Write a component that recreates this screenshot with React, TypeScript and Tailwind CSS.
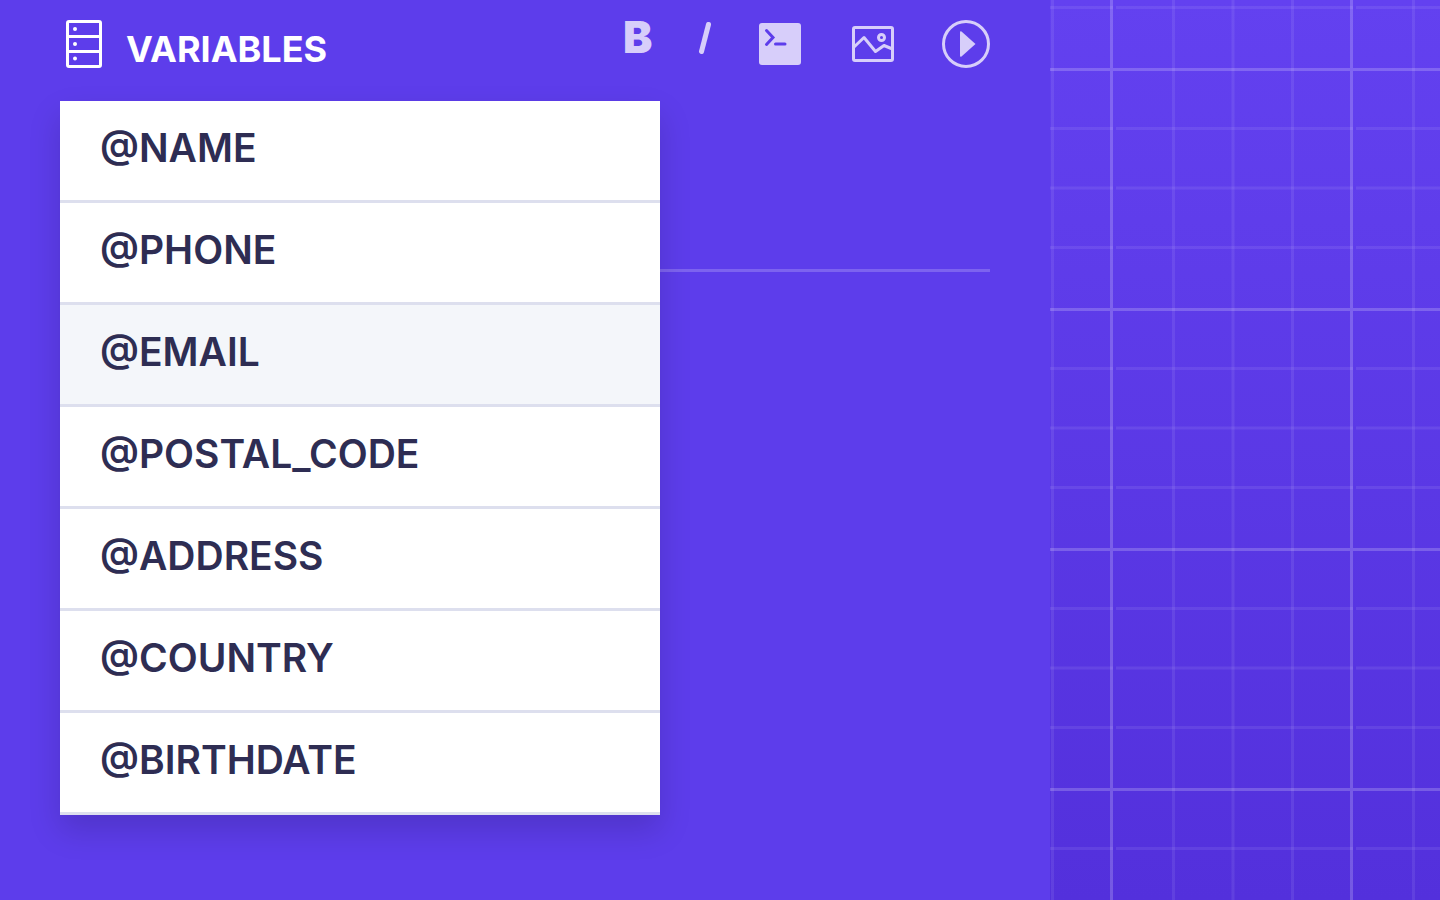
const variables = ["NAME", "PHONE", "EMAIL", "POSTAL_CODE", "ADDRESS", "COUNTRY", "BIRTHDATE"];
const highlighted = "EMAIL";

function ServerIcon() {
  return (
    <svg width="36" height="48" viewBox="0 0 36 48" fill="none" stroke="currentColor" strokeWidth="3" aria-hidden="true">
      <rect x="1.5" y="1.5" width="33" height="45" rx="1.5" />
      <path d="M1.5 16.5h33M1.5 31.5h33" />
      <g fill="currentColor" stroke="none">
        <circle cx="9" cy="9" r="2" />
        <circle cx="9" cy="24" r="2" />
        <circle cx="9" cy="38.5" r="2" />
      </g>
    </svg>
  );
}

function SlantIcon() {
  return (
    <svg width="14" height="32" viewBox="0 0 14 32" stroke="currentColor" strokeWidth="5" strokeLinecap="round" aria-hidden="true">
      <path d="M11.5 2.5L4.5 29.5" />
    </svg>
  );
}

function TerminalIcon() {
  return (
    <svg width="42" height="42" viewBox="0 0 42 42" fill="none" aria-hidden="true">
      <rect width="42" height="42" rx="3" fill="currentColor" />
      <path d="M7.5 7.5L14 14.5L7.5 21.5M16.5 21H26" stroke="#5d3deb" strokeWidth="3" strokeLinecap="round" />
    </svg>
  );
}

function ImageIcon() {
  return (
    <svg width="42" height="36" viewBox="0 0 42 36" fill="none" stroke="currentColor" strokeWidth="3" aria-hidden="true">
      <rect x="1.5" y="1.5" width="39" height="33" rx="1.5" />
      <path d="M1.5 21.5L12 11.5L23.5 25.5L32 19.5L40.5 23" strokeLinejoin="round" />
      <circle cx="29.5" cy="11.5" r="3" />
    </svg>
  );
}

function PlayIcon() {
  return (
    <svg width="48" height="48" viewBox="0 0 48 48" fill="none" aria-hidden="true">
      <circle cx="24" cy="24" r="22.5" stroke="currentColor" strokeWidth="3" />
      <path d="M18 12.5Q18 10.5 19.5 11.5L33.5 24L19.5 36.5Q18 37.5 18 35.5Z" fill="currentColor" />
    </svg>
  );
}

function Blueprint() {
  return (
    <svg className="block size-full" aria-hidden="true">
      <defs>
        <pattern id="cell" x="60" y="68" width="240" height="240" patternUnits="userSpaceOnUse">
          <g fill="#fff" fillOpacity="0.08">
            <rect x="62" width="3" height="240" />
            <rect x="121.5" width="3" height="240" />
            <rect x="181" width="3" height="240" />
            <rect y="59" x="6" width="234" height="3" />
            <rect y="118.5" x="6" width="234" height="3" />
            <rect y="178" x="6" width="234" height="3" />
            <rect y="59" width="3" height="3" />
            <rect y="118.5" width="3" height="3" />
            <rect y="178" width="3" height="3" />
          </g>
          <g fill="#fff" fillOpacity="0.2">
            <rect width="3" height="240" />
            <rect x="3" width="237" height="3" />
          </g>
        </pattern>
      </defs>
      <rect width="100%" height="100%" fill="url(#cell)" />
    </svg>
  );
}

export default function App() {
  return (
    <div className="flex min-h-screen bg-[#5d3deb] font-[Inter,sans-serif]">
      <main className="relative min-w-0 flex-1 px-[60px] pt-5">
        <header className="flex h-12 items-start justify-between text-[#d7cefa]">
          <button
            type="button"
            aria-haspopup="listbox"
            aria-expanded="true"
            className="flex items-start gap-6 pl-1.5 text-white"
          >
            <ServerIcon />
            <span className="pt-[9px] text-[36px] leading-10 font-bold">VARIABLES</span>
          </button>
          <div className="flex items-start gap-12">
            <button type="button" aria-label="Bold" className="w-[26px] text-[44px] leading-[34px] font-black">
              B
            </button>
            <button type="button" aria-label="Italic" className="pt-0.5">
              <SlantIcon />
            </button>
            <button type="button" aria-label="Code" className="w-[45px] pt-[3px]">
              <TerminalIcon />
            </button>
            <button type="button" aria-label="Image" className="pt-1.5">
              <ImageIcon />
            </button>
            <button type="button" aria-label="Video">
              <PlayIcon />
            </button>
          </div>
        </header>

        <hr className="mt-[201px] border-t-[3px] border-white/20" />

        <ul
          role="listbox"
          aria-label="Variables"
          className="absolute top-[101px] left-[60px] w-[600px] bg-white shadow-[0_15px_30px_rgba(0,0,0,0.15)]"
        >
          {variables.map((v) => (
            <li
              key={v}
              role="option"
              aria-selected={v === highlighted}
              className={`border-b-[3px] border-[#dddfee] px-10 pt-[23px] pb-7 text-[39px] leading-[48px] font-semibold text-[#2e2d53] ${
                v === highlighted ? "bg-[#f4f6fa]" : ""
              }`}
            >
              @{v}
            </li>
          ))}
        </ul>
      </main>

      <aside className="relative w-[390px] shrink-0 bg-linear-to-b from-[#6341f0] to-[#5330dc]">
        <div className="absolute inset-0">
          <Blueprint />
        </div>
      </aside>
    </div>
  );
}
